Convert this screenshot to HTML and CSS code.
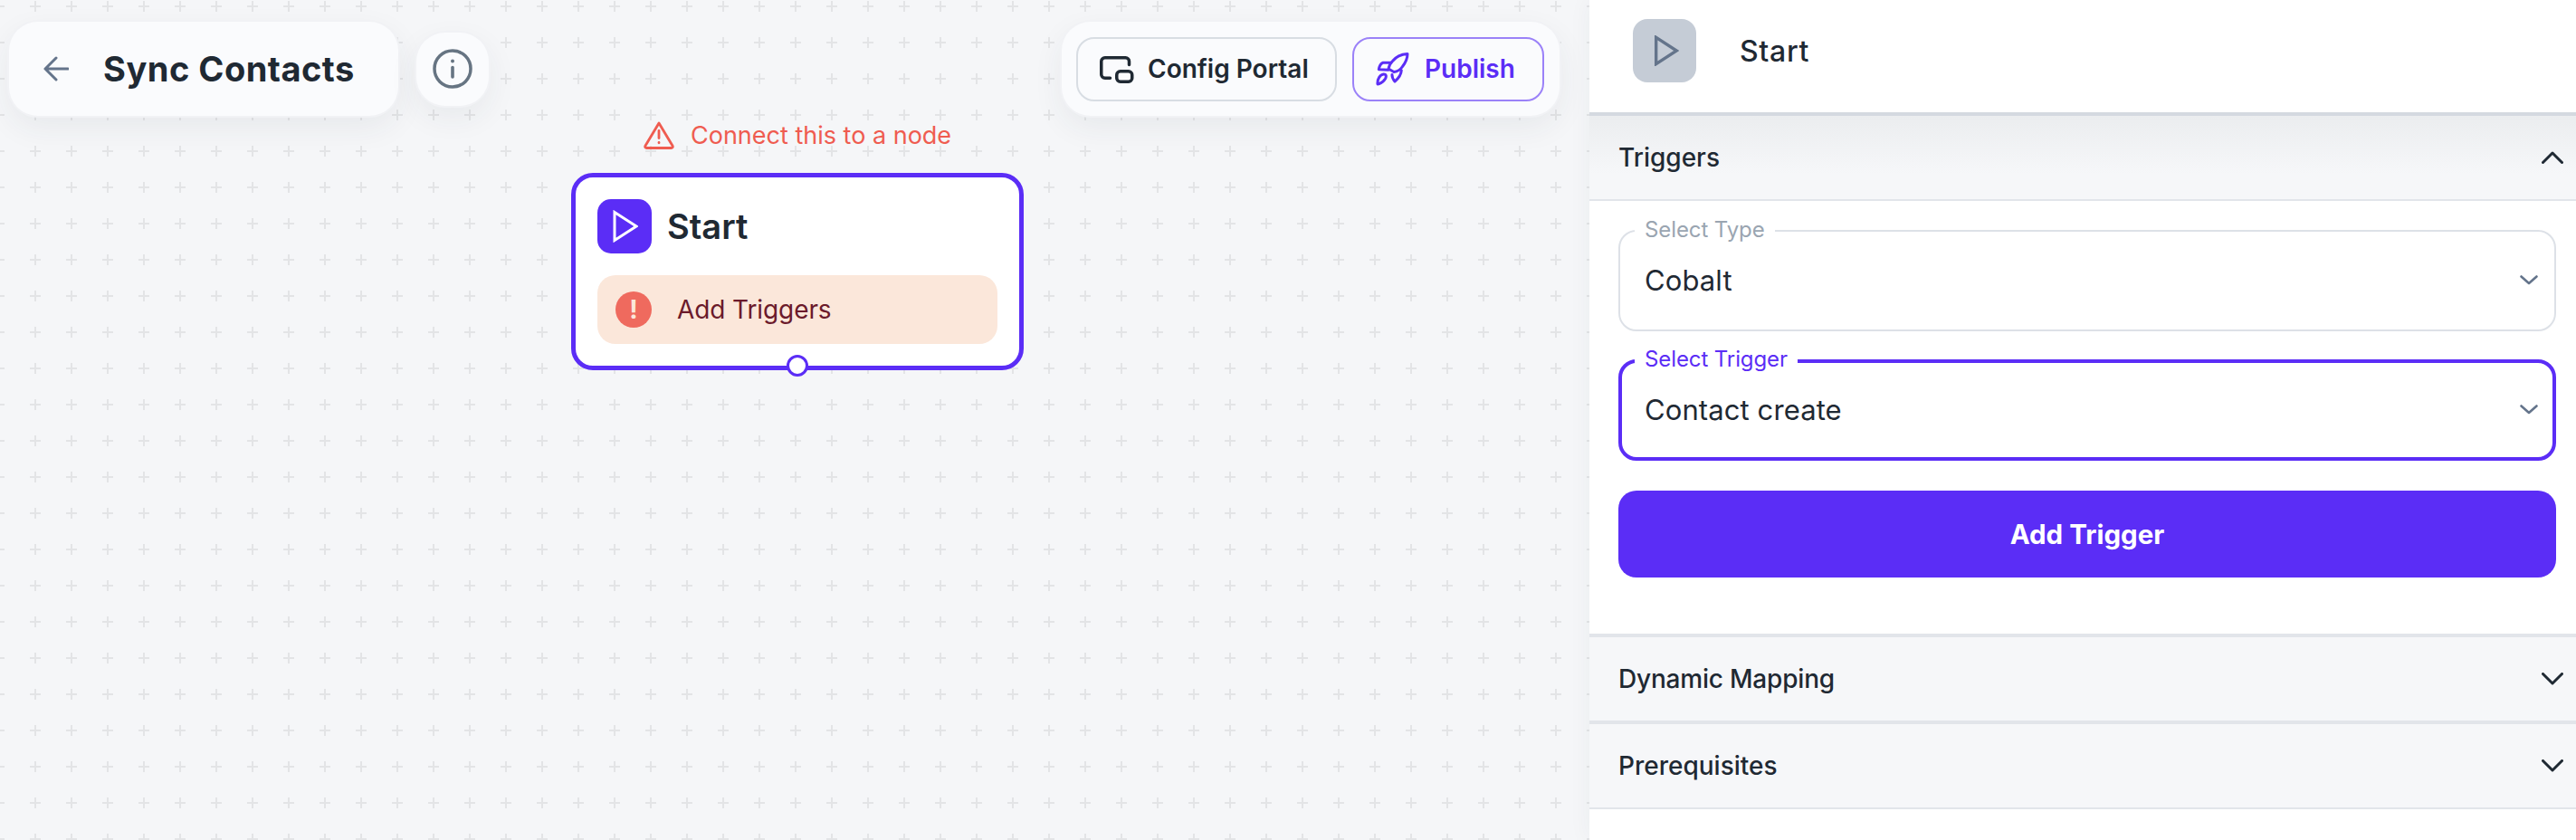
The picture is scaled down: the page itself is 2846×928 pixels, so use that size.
FILE: index.html
```html
<!DOCTYPE html>
<html lang="en">
<head>
<meta charset="utf-8">
<title>Sync Contacts</title>
<link rel="stylesheet" href="styles.css">
</head>
<body>
<main class="canvas">
  <svg class="grid" aria-hidden="true">
    <defs>
      <pattern id="plus" x="19" y="-13" width="40" height="40" patternUnits="userSpaceOnUse">
        <rect x="14" y="19" width="12" height="2" fill="#e3e4e6"/>
        <rect x="19" y="14" width="2" height="12" fill="#e3e4e6"/>
      </pattern>
    </defs>
    <rect width="100%" height="100%" fill="url(#plus)"/>
  </svg>

  <div class="topbar">
    <div class="topbar-left">
      <div class="pill title-pill">
        <svg class="back-icon" viewBox="0 0 28 28" fill="none" stroke="#64748b" stroke-width="3" stroke-linecap="round" stroke-linejoin="round"><path d="M2 14H27M14 2L2 14L14 26"/></svg>
        <h1 class="title">Sync Contacts</h1>
      </div>
      <div class="pill info-pill">
        <svg class="info-icon" viewBox="0 0 44 44" fill="none" stroke="#667482" stroke-width="3.500" stroke-linecap="round"><circle cx="22" cy="22" r="20"/><path d="M22 20.500V31" stroke-width="3.600"/><circle cx="22" cy="13.500" r="2" fill="#667482" stroke="none"/></svg>
      </div>
    </div>
    <div class="pill actions-pill">
      <button class="btn btn-config">
        <svg class="btn-icon" viewBox="0 0 38 31" fill="none" stroke="#1f2933" stroke-width="3.500" stroke-linecap="round" stroke-linejoin="round"><path d="M11.500 25.250H5.750A4 4 0 0 1 1.750 21.250V6.750A4 4 0 0 1 5.750 2.750H28.500A4 4 0 0 1 32.500 6.750V10.500"/><rect x="18.750" y="17.750" width="17" height="11.500" rx="4"/></svg>
        Config Portal
      </button>
      <button class="btn btn-publish">
        <svg class="rocket-icon" viewBox="0 0 38 38" fill="none" stroke="#5b2df6" stroke-width="3" stroke-linecap="round" stroke-linejoin="round"><path d="M35 2.500C28 3 22 6 18.500 10.500C16 13 14.500 16 14 19L20 22.500C24 22 27.500 19.500 29.500 16.500C33 12 35 7 35 2.500Z"/><path d="M16.700 12.300H8C5.500 13 4 16 3.300 19.700L13.800 20.300"/><path d="M28.300 20.700C28 25 26 29 21 33C18.500 30 17.800 27.500 18 25.500"/><path d="M2 36C1.500 30 5 25.500 8.500 25C11.500 24.800 12 27 10.500 30C9 32.500 6 35 2 36Z"/></svg>
        Publish
      </button>
    </div>
  </div>

  <div class="flow">
    <div class="warning">
      <svg class="warning-icon" viewBox="0 0 34 31" fill="none" stroke="#ef5c50" stroke-width="2.800" stroke-linecap="round" stroke-linejoin="round"><path d="M17 2L32 27C32.800 28.500 32 29.500 30.500 29.500H3.500C2 29.500 1.200 28.500 2 27Z"/><path d="M17 10.500V18.500"/><path d="M17 23.500V23.800"/></svg>
      <span>Connect this to a node</span>
    </div>
    <div class="node">
      <div class="node-head">
        <span class="node-icon">
          <svg viewBox="0 0 28 36" fill="none" stroke="#fff" stroke-width="3" stroke-linejoin="miter"><path d="M2 2.500V33.500L26 18Z"/></svg>
        </span>
        <span class="node-title">Start</span>
      </div>
      <div class="node-alert">
        <span class="alert-dot">!</span>
        <span class="alert-text">Add Triggers</span>
      </div>
      <span class="handle"></span>
    </div>
  </div>
</main>

<aside class="panel">
  <header class="panel-head">
    <span class="panel-icon">
      <svg viewBox="0 0 28 36" fill="none" stroke="#64748b" stroke-width="3.600"><path d="M2 2.500V33.500L26 18Z"/></svg>
    </span>
    <span class="panel-title">Start</span>
  </header>

  <section>
    <div class="section-head section-open">
      <span>Triggers</span>
      <svg class="chev" viewBox="0 0 24 14" fill="none" stroke="#1f2933" stroke-width="3" stroke-linecap="round" stroke-linejoin="round"><path d="M1.500 12.500L12 2L22.500 12.500"/></svg>
    </div>
    <div class="section-body">
      <div class="field">
        <span class="field-label">Select Type</span>
        <span class="field-value">Cobalt</span>
        <svg class="field-chev" viewBox="0 0 20 11" fill="none" stroke="#64748b" stroke-width="2.600" stroke-linecap="round" stroke-linejoin="round"><path d="M1.500 1.500L10 9L18.500 1.500"/></svg>
      </div>
      <div class="field field-active">
        <span class="field-label">Select Trigger</span>
        <span class="field-value">Contact create</span>
        <svg class="field-chev" viewBox="0 0 20 11" fill="none" stroke="#64748b" stroke-width="2.600" stroke-linecap="round" stroke-linejoin="round"><path d="M1.500 1.500L10 9L18.500 1.500"/></svg>
      </div>
      <button class="add-btn">Add Trigger</button>
    </div>
  </section>

  <section class="section-closed">
    <div class="section-head">
      <span class="section-name-tight">Dynamic Mapping</span>
      <svg class="chev" viewBox="0 0 24 14" fill="none" stroke="#1f2933" stroke-width="3" stroke-linecap="round" stroke-linejoin="round"><path d="M1.500 1.500L12 12L22.500 1.500"/></svg>
    </div>
  </section>
  <section class="section-closed section-last">
    <div class="section-head">
      <span>Prerequisites</span>
      <svg class="chev" viewBox="0 0 24 14" fill="none" stroke="#1f2933" stroke-width="3" stroke-linecap="round" stroke-linejoin="round"><path d="M1.500 1.500L12 12L22.500 1.500"/></svg>
    </div>
  </section>
</aside>
</body>
</html>
```
FILE: styles.css
```css
* { box-sizing: border-box; }
html, body { margin: 0; height: 100%; }
body {
  display: flex;
  width: 2846px;
  height: 928px;
  overflow: hidden;
  font-family: "Inter", "Liberation Sans", sans-serif;
  color: #1f2933;
  background: #fff;
}
.canvas {
  position: relative;
  width: 1756px;
  flex: none;
  background: #f5f6f8;
  overflow: hidden;
}
.grid { position: absolute; inset: 0; width: 100%; height: 100%; }

.topbar {
  position: relative;
  display: flex;
  justify-content: space-between;
  align-items: center;
  padding: 24px 33px 0 10px;
}
.topbar-left { display: flex; align-items: center; gap: 20px; }
.pill {
  background: #fafbfd;
  border-radius: 32px;
  box-shadow: 0 0 0 2px #f1f2f5, 0 12px 34px rgba(40, 50, 70, 0.07);
}
.title-pill {
  display: flex;
  align-items: center;
  width: 430px;
  height: 104px;
  padding-left: 38px;
  gap: 38px;
}
.back-icon { width: 28px; height: 28px; flex: none; }
.title {
  margin: 0;
  font-size: 38px;
  font-weight: 700;
  letter-spacing: 0.5px;
  line-height: 1;
  white-space: nowrap;
}
.info-pill {
  display: flex;
  align-items: center;
  justify-content: center;
  width: 80px;
  height: 81px;
}
.info-icon { width: 44px; height: 44px; }
.actions-pill {
  display: flex;
  align-items: center;
  gap: 17px;
  width: 550px;
  height: 104px;
  padding-left: 16px;
}
.btn {
  display: flex;
  align-items: center;
  height: 71px;
  border-radius: 20px;
  background: transparent;
  font: 600 28px "Inter", "Liberation Sans", sans-serif;
  white-space: nowrap;
}
.btn-config {
  width: 288px;
  padding: 0 0 0 24px;
  gap: 15px;
  border: 2px solid #d8dde3;
  color: #1f2933;
}
.btn-icon { width: 38px; height: 31px; flex: none; }
.btn-publish {
  width: 212px;
  padding: 0 0 0 24px;
  gap: 16px;
  border: 2px solid #9b82f8;
  color: #5b2df6;
}
.rocket-icon { width: 38px; height: 38px; flex: none; }

.flow {
  position: relative;
  display: flex;
  flex-direction: column;
  width: 500px;
  margin: 6px 0 0 631px;
}
.warning {
  display: flex;
  align-items: center;
  gap: 18px;
  height: 30px;
  margin-left: 80px;
  margin-bottom: 27px;
  color: #ef5c50;
  font-size: 27px;
  white-space: nowrap;
}
.warning-icon { width: 34px; height: 31px; flex: none; }
.node {
  position: relative;
  height: 218px;
  padding: 24px 24px 0;
  background: #fff;
  border: 5px solid #5b2df6;
  border-radius: 24px;
}
.node-head { display: flex; align-items: center; gap: 17px; }
.node-icon {
  display: flex;
  align-items: center;
  justify-content: center;
  width: 60px;
  height: 60px;
  border-radius: 15px;
  background: #5b2df6;
}
.node-icon svg { width: 28px; height: 36px; margin-left: 1px; }
.node-title { font-size: 38px; font-weight: 600; }
.node-alert {
  display: flex;
  align-items: center;
  height: 76px;
  margin-top: 24px;
  padding-left: 20px;
  gap: 28px;
  border-radius: 20px;
  background: #fbe7da;
}
.alert-dot {
  display: flex;
  align-items: center;
  justify-content: center;
  width: 40px;
  height: 40px;
  border-radius: 50%;
  background: #ef6a5e;
  color: #fbe7da;
  font-size: 28px;
  font-weight: 700;
}
.alert-text { font-size: 28px; letter-spacing: -0.1px; color: #6b1a2b; }
.handle {
  position: absolute;
  left: 233px;
  bottom: -12px;
  width: 24px;
  height: 24px;
  border-radius: 50%;
  background: #fff;
  border: 3px solid #5b2df6;
}

.panel {
  width: 1090px;
  flex: none;
  background: #fff;
  box-shadow: 0 0 24px rgba(40, 50, 70, 0.05);
  position: relative;
}
.panel-head {
  display: flex;
  align-items: center;
  gap: 48px;
  height: 128px;
  padding: 0 0 12px 48px;
  border-bottom: 4px solid #d4d9e0;
}
.panel-icon {
  display: flex;
  align-items: center;
  justify-content: center;
  width: 70px;
  height: 70px;
  border-radius: 16px;
  background: #c5ccd6;
}
.panel-icon svg { width: 28px; height: 34px; margin-left: 3px; }
.panel-title { font-size: 32px; font-weight: 500; letter-spacing: 0.7px; }
.section-head {
  display: flex;
  align-items: center;
  justify-content: space-between;
  height: 92px;
  padding: 0 14px 0 32px;
  font-size: 28px;
  font-weight: 500;
  background: #f6f7f9;
}
.section-name-tight { letter-spacing: -0.2px; }
.section-open {
  height: 94px;
  border-bottom: 2px solid #e2e5ea;
  background: linear-gradient(to bottom, #ebedef, #f6f7f9 70%);
}
.chev { width: 24px; height: 14px; }
.section-body {
  display: flex;
  flex-direction: column;
  height: 478px;
  padding: 32px 22px 0 32px;
}
.field {
  position: relative;
  display: flex;
  align-items: center;
  justify-content: space-between;
  height: 112px;
  padding: 0 18px 2px 27px;
  border: 2px solid #dde1e7;
  border-radius: 20px;
}
.field-active {
  margin-top: 31px;
  padding: 0 16px 2px 25px;
  border: 4px solid #5b2df6;
}
.field-label {
  position: absolute;
  top: -14px;
  left: 16px;
  padding: 0 11px;
  background: #fff;
  font-size: 24px;
  letter-spacing: -0.1px;
  line-height: 24px;
  color: #9aa5b1;
}
.field-active .field-label { color: #5b2df6; left: 14px; top: -16px; }
.field-value { font-size: 31px; letter-spacing: 0.1px; }
.field-chev { width: 20px; height: 11px; }
.add-btn {
  height: 96px;
  margin-top: 33px;
  border: 0;
  border-radius: 20px;
  background: #5b2df6;
  color: #fff;
  font: 700 29.500px "Inter", "Liberation Sans", sans-serif;
}
.section-closed { border-top: 4px solid #e2e5ea; }
.section-last { border-bottom: 2px solid #e2e5ea; }
```
